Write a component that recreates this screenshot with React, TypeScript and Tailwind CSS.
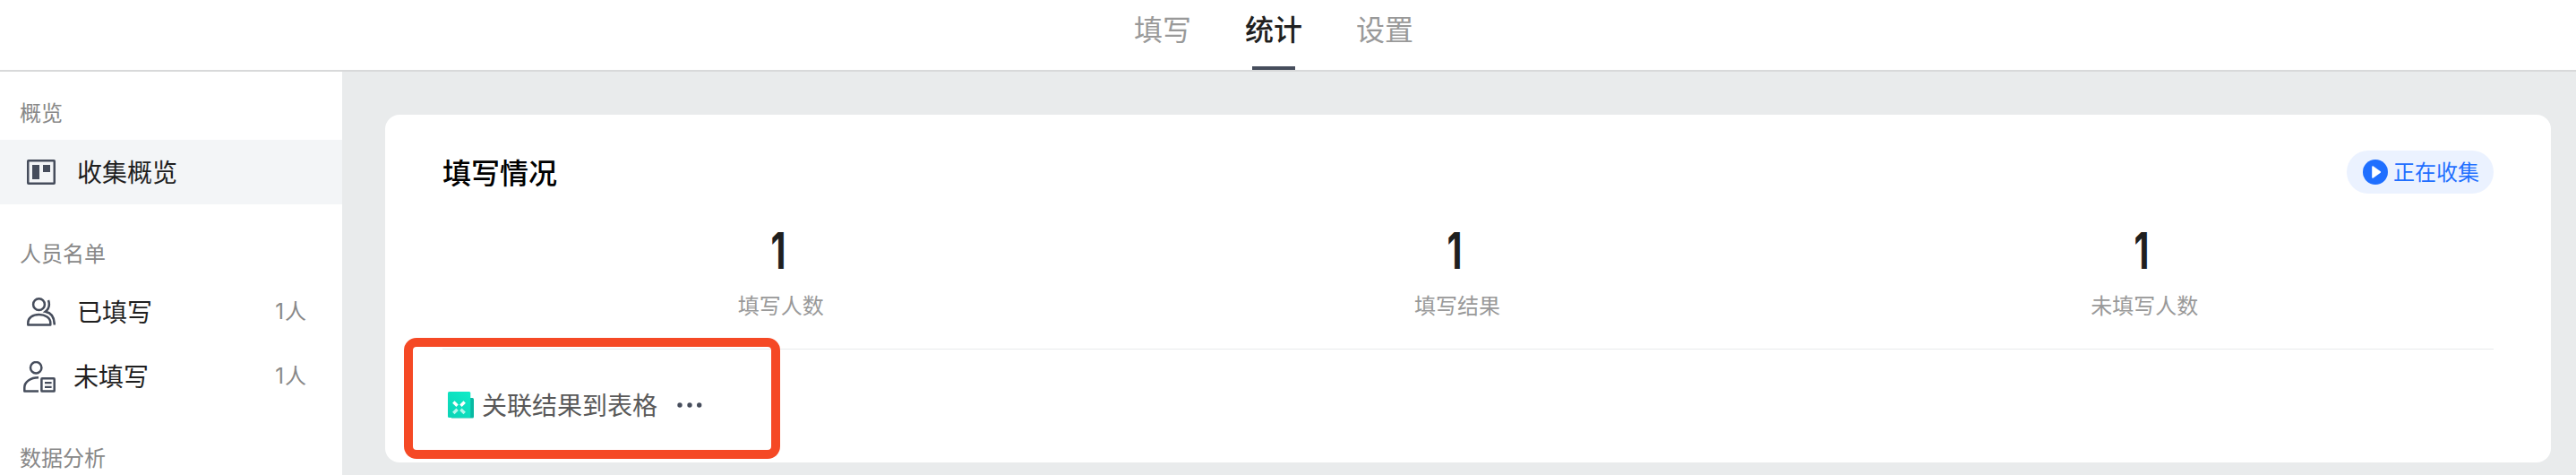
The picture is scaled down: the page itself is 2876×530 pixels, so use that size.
import React from "react";

const ink = "#464d5c";

function BoardIcon() {
  return (
    <svg className="h-7 w-8 shrink-0" viewBox="0 0 32 28" fill="none">
      <rect x="1.25" y="1.25" width="29.5" height="25.5" rx="0.5" stroke={ink} strokeWidth="2.5" />
      <rect x="6" y="6" width="8" height="16" fill={ink} />
      <rect x="18" y="6" width="8" height="8" fill={ink} />
    </svg>
  );
}

function PeopleIcon() {
  return (
    <svg className="h-8 w-8 shrink-0" viewBox="0 0 32 32" fill="none" stroke={ink} strokeWidth="2.5">
      <circle cx="13.5" cy="7.7" r="6.4" />
      <path d="M1.3 30.6V28C1.3 22.6 6.4 18.9 13.5 18.9S26.3 22.6 26.3 28V30.6Z" strokeLinejoin="round" />
      <path d="M24 3C25.8 8 24.6 12.6 20.6 15.8C27.4 17 30.8 22.4 30.8 30.6" />
    </svg>
  );
}

function PersonListIcon() {
  return (
    <svg className="h-[35px] w-9 shrink-0" viewBox="0 0 36 35" fill="none" stroke={ink} strokeWidth="2.5">
      <circle cx="14.2" cy="7.2" r="6.2" />
      <path d="M17 18.3C8 18.3 1.3 23 1.3 29.5V33.6H17" strokeLinejoin="round" />
      <rect x="20.4" y="19.3" width="14.3" height="14.3" rx="0.6" />
      <path d="M24 24.2H31.6M24 28.8H31.6" strokeWidth="2.2" />
    </svg>
  );
}

function SheetIcon() {
  return (
    <svg className="h-[30px] w-[29px] shrink-0" viewBox="0 0 29 30">
      <defs>
        <linearGradient id="sheet" x1="1" y1="0" x2="0.3" y2="1">
          <stop offset="0" stopColor="#0fecc8" />
          <stop offset="1" stopColor="#0cd6b8" />
        </linearGradient>
      </defs>
      <path d="M4 7H27.5Q29 7 29 8.5V28Q29 29.5 27.5 29.5H4Z" fill="#08b9a2" />
      <rect width="25.3" height="29" rx="1.5" fill="url(#sheet)" />
      <g strokeWidth="3.4">
        <path d="M6.300 11.500L10.600 15.800M18.700 11.500L14.400 15.800" stroke="#fff" />
        <path d="M6.300 24L10.600 19.700M18.700 24L14.400 19.700" stroke="#b4f7ec" />
      </g>
    </svg>
  );
}

function PlayIcon() {
  return (
    <svg className="size-7 shrink-0" viewBox="0 0 28 28">
      <circle cx="14" cy="14" r="14" fill="#1f6fff" />
      <path d="M11 8L19.3 14L11 20Z" fill="#fff" stroke="#fff" strokeWidth="1.6" strokeLinejoin="round" />
    </svg>
  );
}

function Stat({ label, value }: { label: string; value: number }) {
  return (
    <div className="flex flex-col items-center">
      <div className="-ml-1.5 h-[72px] origin-center scale-x-[0.7] font-[Inter,sans-serif] text-[56px] leading-[72px] font-bold text-[#1f1f1f]">
        {value}
      </div>
      <div className="mt-1.5 text-2xl leading-9 text-[#999]">{label}</div>
    </div>
  );
}

function GroupTitle({ children }: { children: React.ReactNode }) {
  return <div className="pl-[22px] text-2xl leading-9 text-[#888]">{children}</div>;
}

function Count({ value }: { value: number }) {
  return (
    <span className="flex items-baseline gap-px font-[Inter,'Noto_Sans_CJK_SC',sans-serif] text-2xl text-[#888]">
      <span>{value}</span>
      <span>人</span>
    </span>
  );
}

export default function App() {
  return (
    <div className="flex h-[530px] w-full flex-col overflow-hidden bg-white font-['Noto_Sans_CJK_SC',sans-serif]">
      <header className="flex h-20 shrink-0 justify-center gap-[60px] border-b-2 border-[#d8d9da] pr-8 text-[32px] leading-[63px]">
        <div className="text-[#999]">填写</div>
        <div className="flex flex-col items-center justify-between font-medium text-[#1f1f1f]">
          <span>统计</span>
          <span className="h-1 w-12 bg-[#464d5c]" />
        </div>
        <div className="text-[#999]">设置</div>
      </header>
      <div className="flex min-h-0 flex-1">
        <aside className="flex w-[382px] shrink-0 flex-col text-[28px] text-[#1f1f1f]">
          <div className="pt-[27px] pb-[13px]">
            <GroupTitle>概览</GroupTitle>
          </div>
          <div className="flex h-[72px] shrink-0 items-center bg-[#f3f5f7] pl-[30px]">
            <BoardIcon />
            <span className="ml-6 pb-0.5">收集概览</span>
          </div>
          <div className="pt-9 pb-3">
            <GroupTitle>人员名单</GroupTitle>
          </div>
          <div className="flex h-[72px] shrink-0 items-center pr-10 pl-[30px]">
            <PeopleIcon />
            <span className="ml-6 flex-1 pb-0.5">已填写</span>
            <Count value={1} />
          </div>
          <div className="flex h-[72px] shrink-0 items-center pr-10 pl-[26px]">
            <PersonListIcon />
            <span className="ml-5 flex-1 pb-0.5">未填写</span>
            <Count value={1} />
          </div>
          <div className="pt-9">
            <GroupTitle>数据分析</GroupTitle>
          </div>
        </aside>
        <main className="flex-1 bg-[#e9ebec] pt-12 pr-7 pl-12">
          <section className="relative flex h-[388px] flex-col rounded-2xl bg-white px-16 pt-10">
            <div className="flex h-12 items-center justify-between">
              <h2 className="pb-[3px] text-[32px] font-medium text-black">填写情况</h2>
              <div className="flex h-12 items-center gap-1.5 rounded-full bg-[#ebf2ff] pr-4 pl-[18px] text-2xl text-[#1f6fff]">
                <PlayIcon />
                <span className="pb-0.5">正在收集</span>
              </div>
            </div>
            <div className="mt-7 flex h-[146px] justify-around border-b border-[#e9ebec]">
              <Stat label="填写人数" value={1} />
              <Stat label="填写结果" value={1} />
              <Stat label="未填写人数" value={1} />
            </div>
            <div className="flex flex-1 items-center pb-0.5 pl-1.5">
              <SheetIcon />
              <span className="ml-[9px] pb-0.5 text-[28px] text-[#595959]">关联结果到表格</span>
              <svg className="ml-[22px] h-1.5 w-7" viewBox="0 0 28 6" fill={ink}>
                <circle cx="3" cy="3" r="2.7" />
                <circle cx="14" cy="3" r="2.7" />
                <circle cx="24.7" cy="3" r="2.7" />
              </svg>
            </div>
            <div className="absolute top-[249px] left-[21px] h-[135px] w-[420px] rounded-[14px] border-[10px] border-[#f54925]" />
          </section>
        </main>
      </div>
    </div>
  );
}
